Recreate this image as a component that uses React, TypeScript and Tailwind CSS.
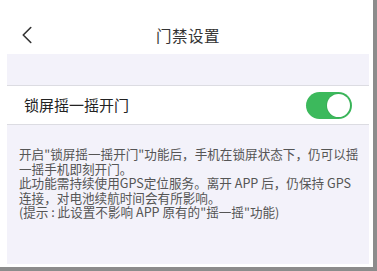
import { ChevronLeft } from 'lucide-react'

const FONT = { fontFamily: '"Noto Sans CJK SC", "Noto Sans", sans-serif' }

function Toggle() {
  return (
    <div className="flex h-[27px] w-[46px] items-center justify-end rounded-full bg-[#3cb95c] p-[2px]">
      <div className="h-[23px] w-[23px] rounded-full bg-white shadow-[0_0_0_1px_rgba(0,0,0,0.06)]" />
    </div>
  )
}

export default function App() {
  return (
    <div
      className="h-[271px] w-[377px] border-b-[4px] border-r-[4px] border-[#8c8c8c] bg-white pb-[3px] pl-[7px] pr-[4px]"
      style={FONT}
    >
      <div className="flex h-full flex-col bg-[#f3f2fa]">
        <header className="relative flex h-[54px] shrink-0 items-center justify-center bg-white pt-[18px]">
          <ChevronLeft
            className="absolute left-[5px] top-[20px] h-[30px] w-[30px] text-[#333]"
            strokeWidth={1.3}
          />
          <h1 className="text-[15.5px] tracking-[0.5px] text-[#333]">门禁设置</h1>
        </header>

        <div className="h-[31px] shrink-0" />

        <div className="flex h-[40px] shrink-0 items-center justify-between border-y border-[#dcdce2] bg-white pl-[17px] pr-[17px]">
          <span className="text-[15px] text-[#222]">锁屏摇一摇开门</span>
          <Toggle />
        </div>

        <div className="pl-[12px] pr-[8px] pt-[22px] text-[12.6px] leading-[14.5px] text-[#555]">
          <p className="whitespace-nowrap">
            开启"锁屏摇一摇开门"功能后，手机在锁屏状态下，仍可以摇
            <br />
            一摇手机即刻开门。
          </p>
          <p className="whitespace-nowrap">
            此功能需持续使用GPS定位服务。离开 APP 后，仍保持 GPS
            <br />
            连接，对电池续航时间会有所影响。
          </p>
          <p className="whitespace-nowrap">(提示 : 此设置不影响 APP 原有的"摇一摇"功能)</p>
        </div>
      </div>
    </div>
  )
}
